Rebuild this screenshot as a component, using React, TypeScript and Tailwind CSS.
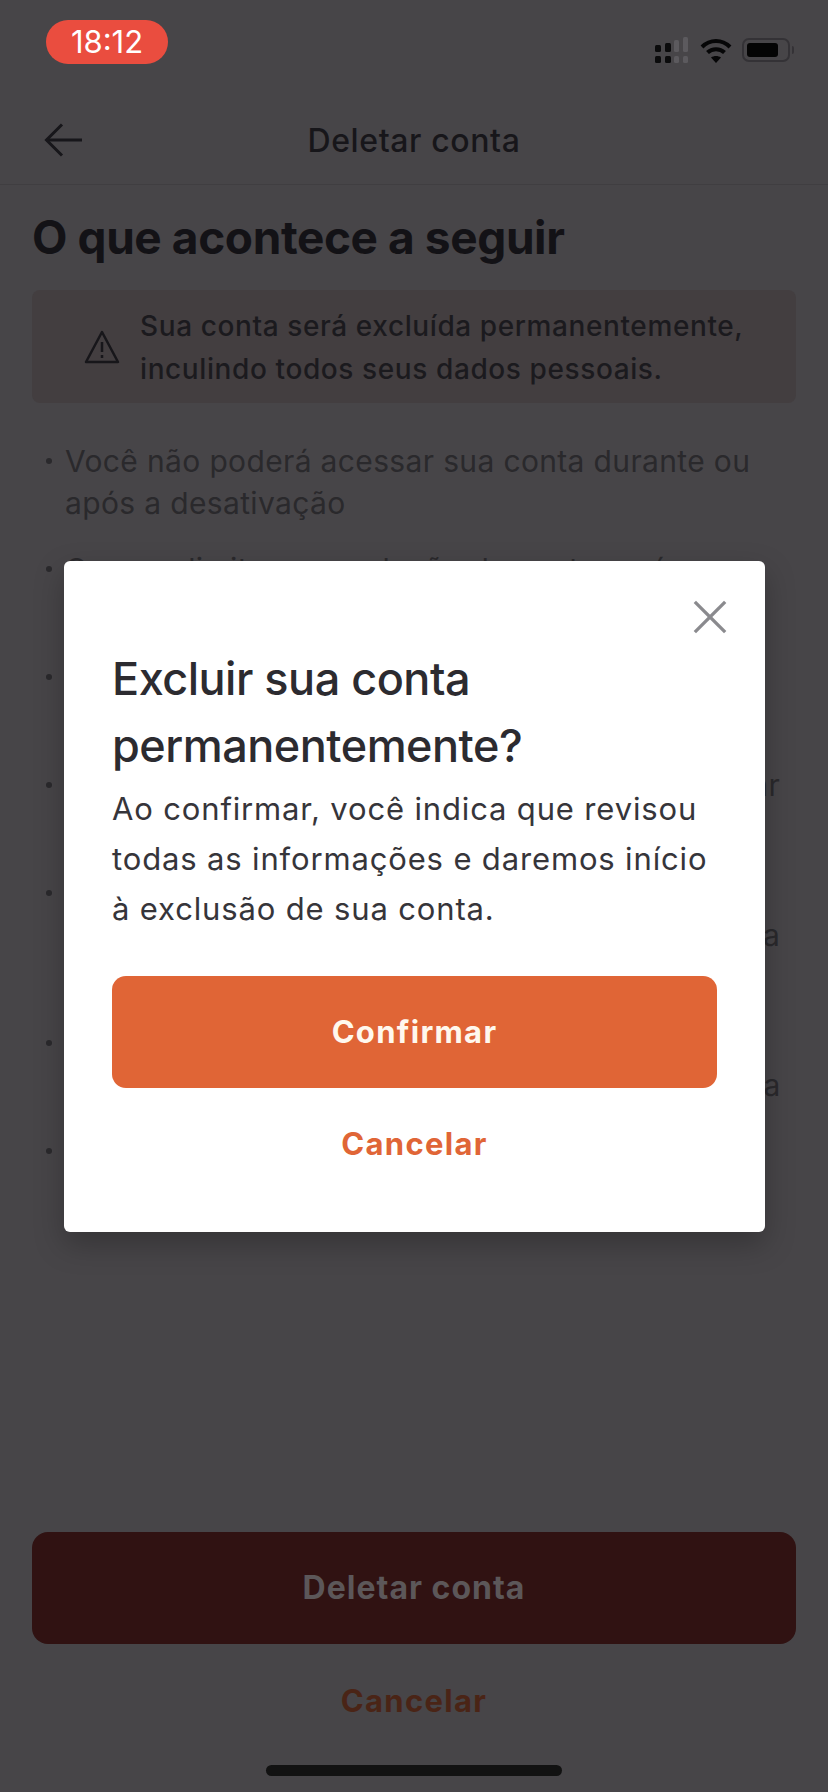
const bullets = [
  ['Você não poderá acessar sua conta durante ou', 'após a desativação'],
  ['O prazo limite para solução da conta será', 'encerrado após a exclusão'],
  ['Seus pedidos em andamento serão', 'cancelados automaticamente'],
  ['Todos os seus endereços registrados vão expirar', 'e não poderão ser recuperados'],
  ['Seus dados de pagamento serão removidos', 'de acordo com a política vigente de uso da conta', 'na plataforma'],
  ['Seu histórico de compras será apagado de', 'acordo com a legislação brasileira vigente na sua'],
  ['Esta ação não poderá ser desfeita'],
];

function StatusIcons() {
  return (
    <div className="flex items-center gap-[10px]">
      <svg width="36" height="26" viewBox="0 0 36 26">
        <rect x="1" y="8" width="6" height="7" rx="1.5" fill="#0b0b0c" />
        <rect x="1" y="19" width="6" height="7" rx="1.5" fill="#0b0b0c" />
        <rect x="11" y="6" width="6" height="9" rx="1.5" fill="#0b0b0c" />
        <rect x="11" y="19" width="6" height="7" rx="1.5" fill="#0b0b0c" />
        <rect x="20" y="3" width="5" height="12" rx="1.5" fill="#5c5a5e" />
        <rect x="20" y="19" width="5" height="7" rx="1.5" fill="#5c5a5e" />
        <rect x="29" y="0" width="5" height="15" rx="1.5" fill="#5c5a5e" />
        <rect x="29" y="19" width="5" height="7" rx="1.5" fill="#5c5a5e" />
      </svg>
      <svg width="32" height="25" viewBox="0 0 32 25" fill="none" stroke="#060607" strokeWidth="4">
        <path d="M2 9 C 10 1, 22 1, 30 9" />
        <path d="M7.5 14.5 C 12 10, 20 10, 24.5 14.5" />
        <path d="M16 25 L11 19.5 C 14 17.5, 18 17.5, 21 19.5 Z" fill="#060607" stroke="none" />
      </svg>
      <div className="flex items-center gap-[2px]">
        <div className="flex h-[24px] w-[48px] items-center rounded-[7px] border-2 border-[#343236] p-[3px]">
          <div className="h-full w-[31px] rounded-[3px] bg-[#040404]" />
        </div>
        <div className="h-[8px] w-[2px] rounded-r-full bg-[#343236]" />
      </div>
    </div>
  );
}

export default function App() {
  return (
    <div className="relative flex h-[1792px] w-[828px] flex-col overflow-hidden bg-[#474548] font-['Inter',sans-serif]">
      <div className="flex h-[94px] items-start justify-between pl-[46px] pr-[34px]">
        <div className="mt-[20px] flex h-[44px] w-[122px] items-center justify-center rounded-[22px] bg-[#ea4d3f] text-[31px] text-white">
          18:12
        </div>
        <div className="mt-[37px]">
          <StatusIcons />
        </div>
      </div>

      <div className="relative flex h-[91px] items-center justify-center border-b border-[#403e41] pt-[4px]">
        <svg className="absolute left-[44px] top-[29px]" width="40" height="34" viewBox="0 0 40 34" fill="none" stroke="#17161a" strokeWidth="3">
          <path d="M2 17 H38" />
          <path d="M18 1.5 L2.5 17 L18 32.5" />
        </svg>
        <span className="text-[32px] font-medium tracking-[0.6px] text-[#17161a]">Deletar conta</span>
      </div>

      <div className="px-[32px]">
        <h1 className="mt-[22px] text-[46px] leading-[60px] font-bold tracking-[-0.4px] text-[#131216]">O que acontece a seguir</h1>
        <div className="mt-[23px] flex h-[113px] items-center gap-[20px] rounded-[8px] bg-[#433e40] pl-[52px]">
          <svg width="36" height="36" viewBox="0 0 36 36" fill="none" stroke="#17161a" strokeWidth="2.5" strokeLinejoin="round" className="shrink-0">
            <path d="M18 3 L34 33 H2 Z" />
            <path d="M18 13 V23" />
            <path d="M18 26 V29" />
          </svg>
          <p className="pt-[2px] text-[28px] leading-[43px] font-medium tracking-[0.6px] text-[#1b1a1e]">
            Sua conta será excluída permanentemente,
            <br />
            inculindo todos seus dados pessoais.
          </p>
        </div>
        <ul className="mt-[37px] flex flex-col gap-[24px]">
          {bullets.map((lines) => (
            <li key={lines[0]} className="relative whitespace-nowrap pl-[33px] text-[30px] leading-[42px] tracking-[0.35px] text-[#2a292c]">
              <span className="absolute left-[14px] top-[18px] size-[6px] rounded-full bg-[#2a292c]" />
              {lines.map((line) => (
                <div key={line}>{line}</div>
              ))}
            </li>
          ))}
        </ul>
      </div>

      <div className="mt-auto flex flex-col items-center px-[32px] pb-[16px]">
        <div className="flex h-[112px] w-full items-center justify-center rounded-[16px] bg-[#301212] text-[32px] font-bold tracking-[1px] text-[#5c5759]">
          Deletar conta
        </div>
        <div className="mt-[34px] text-[31px] font-bold tracking-[1.3px] text-[#4a2416]">Cancelar</div>
        <div className="mt-[41px] h-[11px] w-[296px] rounded-full bg-[#121212]" />
      </div>

      <div className="absolute left-[64px] top-[561px] flex h-[671px] w-[701px] flex-col rounded-[6px] bg-white px-[48px] shadow-[0_12px_30px_rgba(0,0,0,0.25)]">
        <button className="absolute right-[37px] top-[38px]">
          <svg width="36" height="36" viewBox="0 0 38 38" fill="none" stroke="#8a8a8e" strokeWidth="3.5">
            <path d="M3 3 L35 35" />
            <path d="M35 3 L3 35" />
          </svg>
        </button>
        <h2 className="mt-[84px] text-[45px] leading-[67px] font-medium tracking-[-0.5px] text-[#2c2b30]">
          Excluir sua conta
          <br />
          permanentemente?
        </h2>
        <p className="mt-[5px] text-[31px] leading-[50px] tracking-[0.85px] text-[#36353a]">
          Ao confirmar, você indica que revisou
          <br />
          todas as informações e daremos início
          <br />à exclusão de sua conta.
        </p>
        <button className="mt-[42px] flex h-[112px] w-full items-center justify-center rounded-[14px] bg-[#e06536] text-[31px] font-bold tracking-[1.3px] text-[#fff8ee]">
          Confirmar
        </button>
        <button className="mt-[33px] text-[31px] font-bold tracking-[1.3px] text-[#e06536]">Cancelar</button>
      </div>
    </div>
  );
}
